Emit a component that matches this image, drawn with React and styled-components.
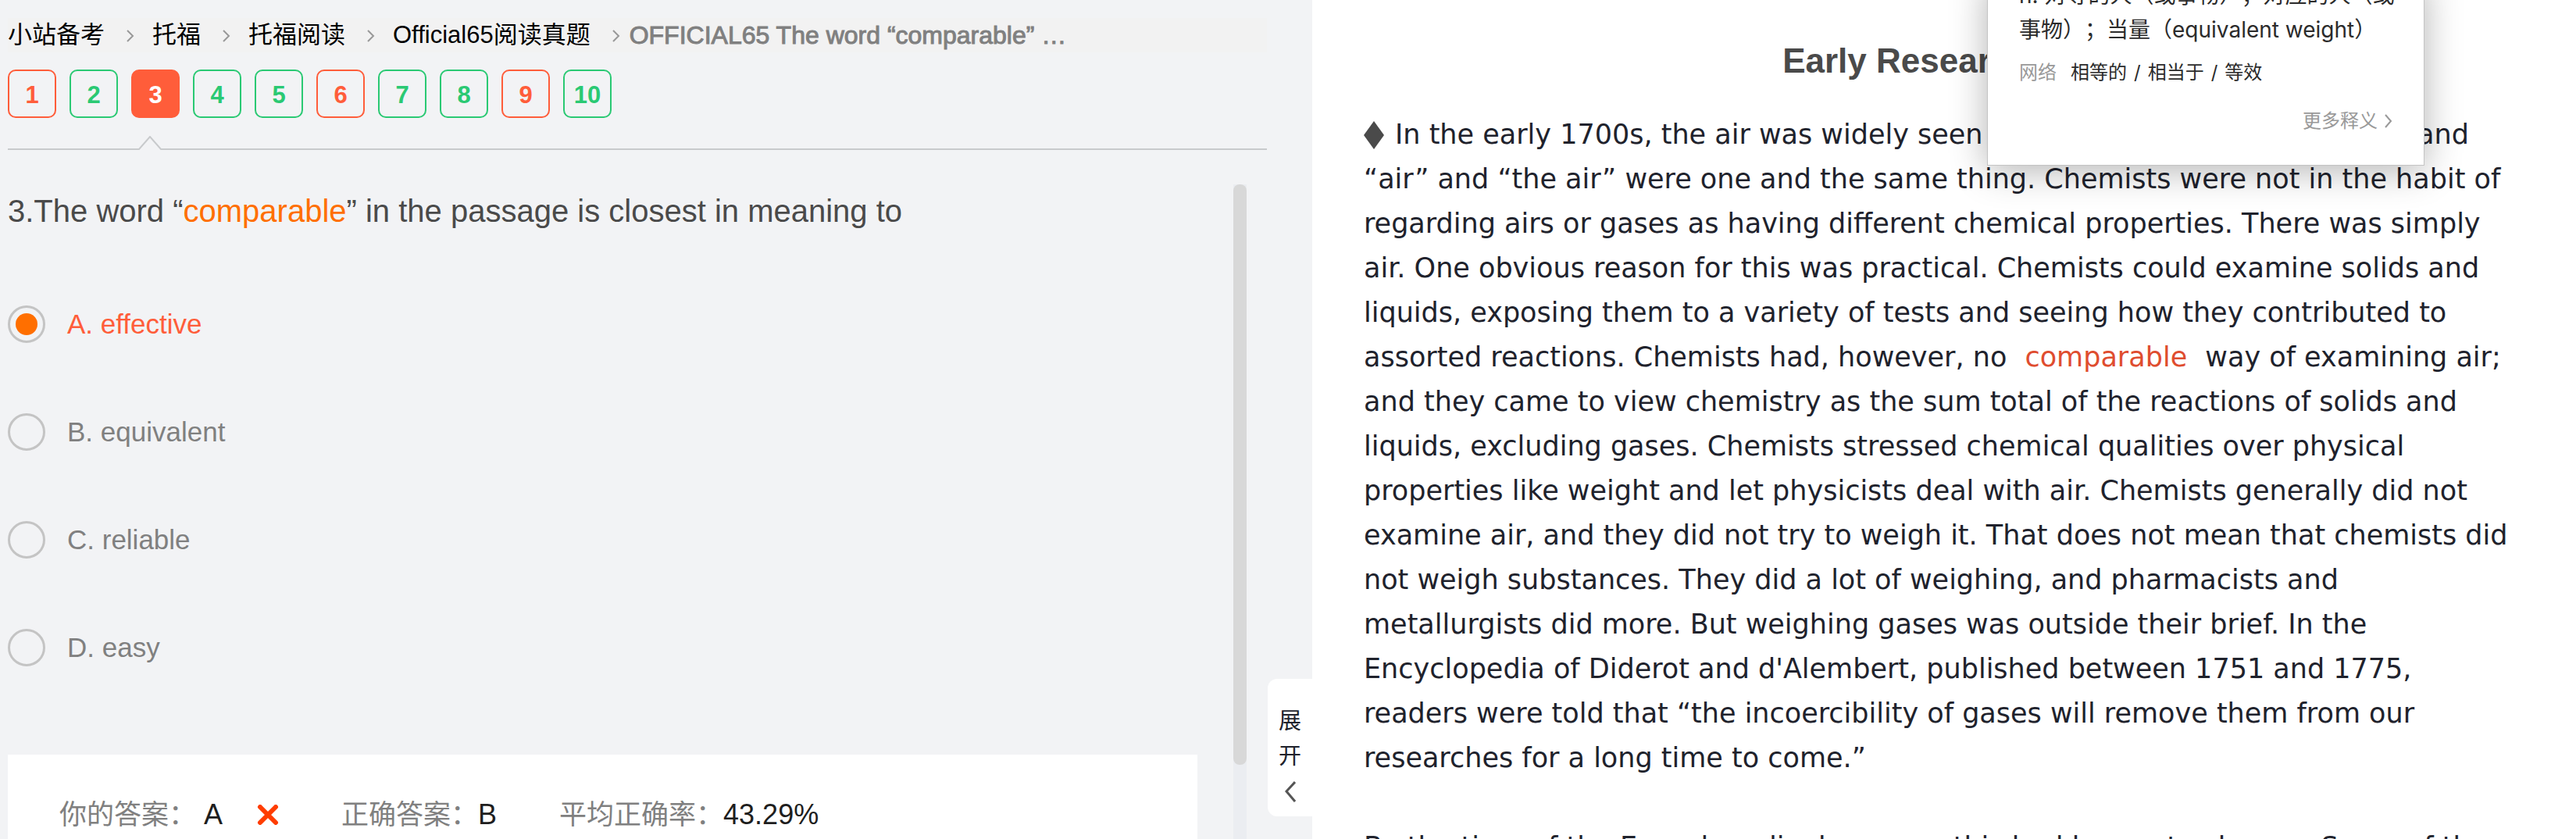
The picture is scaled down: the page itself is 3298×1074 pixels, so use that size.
import React, { useState } from "react";
import styled, { createGlobalStyle } from "styled-components";

const sans = '"Liberation Sans", "Noto Sans CJK SC", sans-serif';
const reading = '"DejaVu Sans", "Noto Sans CJK SC", sans-serif';
const dictionary = 'Inter, "Noto Sans CJK SC", sans-serif';

const RED = "#ff5d3a";
const GREEN = "#2ac973";

const GlobalStyle = createGlobalStyle`
  * { box-sizing: border-box; }
  body { margin: 0; font-family: ${sans}; background: #fff; }
  button { font: inherit; cursor: pointer; }
`;

const Page = styled.div`
  position: relative;
  display: grid;
  grid-template-columns: 840fr 809fr;
  grid-template-rows: minmax(0, 1fr);
  height: 100vh;
  overflow: hidden;
`;

const QuestionPane = styled.section`
  position: relative;
  display: flex;
  flex-direction: column;
  min-width: 0;
  min-height: 0;
  padding: 23px 58px 0 10px;
  background: #f2f3f5;
`;

const Crumbs = styled.nav`
  display: flex;
  align-items: center;
  height: 44px;
  background: #f2f2f2;
  font-size: 31px;
  line-height: 44px;
  white-space: nowrap;
`;

const Crumb = styled.a`
  color: #000;
  text-decoration: none;
`;

const CurrentCrumb = styled.span`
  color: #808080;
  font-size: 32px;
  -webkit-text-stroke: 1px #808080;
`;

const Separator = styled.svg`
  flex: none;
  width: 12px;
  height: 16px;
  margin: 2px ${(p) => (p.$last ? 11 : 22)}px 0 27px;
  fill: none;
  stroke: #999;
  stroke-width: 2;
`;

const Numbers = styled.div`
  display: flex;
  gap: 17px;
  margin-top: 22px;
`;

const NumberButton = styled.button`
  width: 62px;
  height: 62px;
  padding: 4px 0 0;
  border: 2px solid ${(p) => p.$color};
  border-radius: 10px;
  background: ${(p) => (p.$active ? p.$color : "transparent")};
  color: ${(p) => (p.$active ? "#fff" : p.$color)};
  font-size: 31px;
  font-weight: 700;
  line-height: 54px;
`;

const Divider = styled.div`
  display: flex;
  align-items: flex-end;
  height: 20px;
  margin-top: 21px;

  &::before {
    content: "";
    width: 167px;
    height: 2px;
    background: #c8cacc;
  }

  &::after {
    content: "";
    flex: 1;
    height: 2px;
    background: #c8cacc;
  }
`;

const Notch = styled.svg`
  width: 30px;
  height: 18px;
  fill: none;
  stroke: #c8cacc;
  stroke-width: 2;
`;

const ScrollRow = styled.div`
  display: flex;
  flex: 1;
  justify-content: space-between;
  min-height: 0;
  margin: 44px 26px 0 0;
`;

const ScrollContent = styled.div`
  flex: 1;
  margin-right: 46px;
  overflow: hidden;
`;

const Track = styled.div`
  width: 17px;
  background: #ebedf1;
`;

const Thumb = styled.div`
  height: 743px;
  border-radius: 8px;
  background: #d8d8d8;
`;

const Question = styled.h2`
  margin: 11px 0 0;
  color: #4a4a4a;
  font-size: 40px;
  font-weight: 400;
  line-height: 46px;
`;

const Keyword = styled.span`
  color: #ff6f00;
`;

const Options = styled.div`
  display: flex;
  flex-direction: column;
  gap: 90px;
  margin-top: 98px;
`;

const Option = styled.label`
  display: flex;
  align-items: center;
  gap: 28px;
  height: 48px;
  color: ${(p) => (p.$selected ? RED : "#808080")};
  font-size: 35px;
  line-height: 48px;
`;

const Radio = styled.input`
  appearance: none;
  display: grid;
  place-items: center;
  width: 48px;
  height: 48px;
  margin: 0;
  border: 3px solid #c4c4c4;
  border-radius: 50%;

  &:checked::before {
    content: "";
    width: 28px;
    height: 28px;
    border-radius: 50%;
    background: #ff6f00;
  }
`;

const Answers = styled.dl`
  display: flex;
  align-items: flex-start;
  gap: 80px;
  height: 400px;
  margin: 113px 0 0;
  padding: 52px 66px 0;
  background: #fff;
  font-size: 35px;
  line-height: 50px;
`;

const Answer = styled.div`
  display: flex;
  align-items: center;
`;

const AnswerLabel = styled.dt`
  color: #808080;
`;

const AnswerValue = styled.dd`
  display: flex;
  align-items: center;
  gap: 44px;
  margin: 0;
  padding-left: ${(p) => (p.$spaced ? 10 : 0)}px;
  color: #1e1e1e;
  font-size: 36px;
`;

const Cross = styled.svg`
  width: 28px;
  height: 26px;
  stroke: #ff3d00;
  stroke-width: 6;
  stroke-linecap: round;
`;

const ExpandTab = styled.button`
  position: absolute;
  right: 0;
  bottom: 29px;
  display: flex;
  flex-direction: column;
  align-items: center;
  width: 57px;
  height: 176px;
  padding: 32px 0 0;
  border: 0;
  border-radius: 12px 0 0 12px;
  background: #fff;
  color: #20222c;
  font-size: 29px;
  line-height: 45px;
`;

const TabArrow = styled.svg`
  width: 14px;
  height: 27px;
  margin-top: 9px;
  fill: none;
  stroke: #555;
  stroke-width: 3;
`;

const Passage = styled.main`
  min-width: 0;
  padding: 48px 24px 0 66px;
  color: #20222c;
  font-family: ${reading};
  font-size: 35px;
  line-height: 57px;
  white-space: nowrap;
`;

const Heading = styled.h1`
  margin: 0 0 36px;
  color: #4a4a4a;
  font-family: ${sans};
  font-size: 44px;
  line-height: 60px;
  text-align: center;
`;

const Paragraph = styled.p`
  margin: 0 0 57px;
`;

const Diamond = styled.svg`
  width: 26px;
  height: 36px;
  margin-right: 14px;
  vertical-align: -7px;
  fill: #4a4a4a;
`;

const Mark = styled.span`
  padding: 0 12px;
  color: #df4d2f;
`;

const Popup = styled.aside`
  position: absolute;
  top: -29px;
  right: 194px;
  width: 560px;
  height: 241px;
  padding: 0 40px;
  border: 1px solid #c4c4c4;
  background: #fff;
  box-shadow: 0 6px 44px rgba(0, 0, 0, 0.3);
  color: #2b2b2b;
  font-family: ${dictionary};
  font-size: 24px;
  text-spacing-trim: space-all;
`;

const Meaning = styled.div`
  font-size: 28px;
  line-height: 44px;
  white-space: nowrap;
`;

const Network = styled.div`
  display: flex;
  gap: 9px;
  margin-top: 15px;
  line-height: 36px;
`;

const Muted = styled.span`
  margin-right: 9px;
  color: #999;
`;

const MoreLink = styled.a`
  display: flex;
  align-items: center;
  justify-content: flex-end;
  gap: 8px;
  margin-top: 26px;
  color: #999;
  line-height: 36px;
  text-decoration: none;
`;

const MoreArrow = styled.svg`
  width: 11px;
  height: 18px;
  fill: none;
  stroke: #999;
  stroke-width: 2;
`;

const crumbs = ["小站备考", "托福", "托福阅读", "Official65阅读真题"];
const wrong = [1, 3, 6, 9];
const options = ["A. effective", "B. equivalent", "C. reliable", "D. easy"];

export default function App() {
  const [selected, setSelected] = useState(0);
  return (
    <Page>
      <GlobalStyle />
      <QuestionPane>
        <Crumbs>
          {crumbs.map((text, i) => (
            <React.Fragment key={text}>
              <Crumb href="#">{text}</Crumb>
              <Separator viewBox="0 0 12 16" $last={i === 3}>
                <path d="M2 1 L9 8 L2 15" />
              </Separator>
            </React.Fragment>
          ))}
          <CurrentCrumb>OFFICIAL65 The word “comparable” …</CurrentCrumb>
        </Crumbs>
        <Numbers>
          {[1, 2, 3, 4, 5, 6, 7, 8, 9, 10].map((n) => (
            <NumberButton key={n} $color={wrong.includes(n) ? RED : GREEN} $active={n === 3}>
              {n}
            </NumberButton>
          ))}
        </Numbers>
        <Divider>
          <Notch viewBox="0 0 30 18">
            <path d="M0 17 L1 17 L15 1 L29 17 L30 17" />
          </Notch>
        </Divider>
        <ScrollRow>
          <ScrollContent>
            <Question>
              3.The word “<Keyword>comparable</Keyword>” in the passage is closest in meaning to
            </Question>
            <Options>
              {options.map((text, i) => (
                <Option key={text} $selected={i === selected}>
                  <Radio
                    type="radio"
                    name="answer"
                    checked={i === selected}
                    onChange={() => setSelected(i)}
                  />
                  {text}
                </Option>
              ))}
            </Options>
            <Answers>
              <Answer>
                <AnswerLabel>你的答案：</AnswerLabel>
                <AnswerValue $spaced>
                  A
                  <Cross viewBox="0 0 28 26">
                    <path d="M4 3 L24 23 M24 3 L4 23" />
                  </Cross>
                </AnswerValue>
              </Answer>
              <Answer>
                <AnswerLabel>正确答案：</AnswerLabel>
                <AnswerValue>B</AnswerValue>
              </Answer>
              <Answer>
                <AnswerLabel>平均正确率：</AnswerLabel>
                <AnswerValue>43.29%</AnswerValue>
              </Answer>
            </Answers>
          </ScrollContent>
          <Track>
            <Thumb />
          </Track>
        </ScrollRow>
        <ExpandTab>
          <span>展</span>
          <span>开</span>
          <TabArrow viewBox="0 0 14 27">
            <path d="M13 1 L2 13 L13 26" />
          </TabArrow>
        </ExpandTab>
      </QuestionPane>
      <Passage>
        <Heading>Early Research on Air</Heading>
        <Paragraph>
          <Diamond viewBox="0 0 26 36">
            <path d="M13 0 L26 18 L13 36 L0 18 Z" />
          </Diamond>
          In the early 1700s, the air was widely seen as a simple element in nature, and
          <br />
          “air” and “the air” were one and the same thing. Chemists were not in the habit of
          <br />
          regarding airs or gases as having different chemical properties. There was simply
          <br />
          air. One obvious reason for this was practical. Chemists could examine solids and
          <br />
          liquids, exposing them to a variety of tests and seeing how they contributed to
          <br />
          assorted reactions. Chemists had, however, no <Mark>comparable</Mark> way of examining air;
          <br />
          and they came to view chemistry as the sum total of the reactions of solids and
          <br />
          liquids, excluding gases. Chemists stressed chemical qualities over physical
          <br />
          properties like weight and let physicists deal with air. Chemists generally did not
          <br />
          examine air, and they did not try to weigh it. That does not mean that chemists did
          <br />
          not weigh substances. They did a lot of weighing, and pharmacists and
          <br />
          metallurgists did more. But weighing gases was outside their brief. In the
          <br />
          Encyclopedia of Diderot and d'Alembert, published between 1751 and 1775,
          <br />
          readers were told that “the incoercibility of gases will remove them from our
          <br />
          researches for a long time to come.”
        </Paragraph>
        <Paragraph>
          By the time of the Encyclopedia, however, this had begun to change. Some of the
        </Paragraph>
      </Passage>
      <Popup>
        <Meaning>
          n. 对等的人（或事物）；对应的人（或
          <br />
          事物）；当量（equivalent weight）
        </Meaning>
        <Network>
          <Muted>网络</Muted>
          <span>相等的</span>
          <span>/</span>
          <span>相当于</span>
          <span>/</span>
          <span>等效</span>
        </Network>
        <MoreLink href="#">
          更多释义
          <MoreArrow viewBox="0 0 11 18">
            <path d="M2 1 L9 9 L2 17" />
          </MoreArrow>
        </MoreLink>
      </Popup>
    </Page>
  );
}
